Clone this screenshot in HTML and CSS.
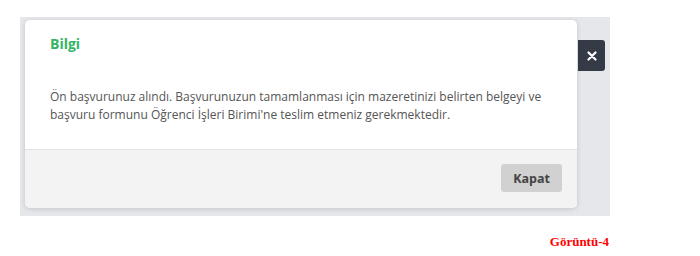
FILE: index.html
```html
<!DOCTYPE html>
<html lang="tr">
<head>
    <meta charset="UTF-8">
    <meta name="viewport" content="width=device-width, initial-scale=1.0">
    <title>Görüntü-4</title>
    <link rel="stylesheet" href="styles.css">
</head>
<body>
    <div class="backdrop">
        <div class="modal">
            <div class="modal-header">
                <h4>Bilgi</h4>
            </div>
            <div class="modal-body">
                <p>Ön başvurunuz alındı. Başvurunuzun tamamlanması için mazeretinizi belirten belgeyi ve başvuru formunu Öğrenci İşleri Birimi'ne teslim etmeniz gerekmektedir.</p>
            </div>
            <div class="modal-footer">
                <button type="button">Kapat</button>
            </div>
        </div>
        <button type="button" class="close-btn" aria-label="Kapat">
            <svg width="10" height="10" viewBox="0 0 10 10">
                <path d="M1.5 1.5 L8.5 8.5 M8.5 1.5 L1.5 8.5" stroke="#fff" stroke-width="2.2" stroke-linecap="round"/>
            </svg>
        </button>
    </div>

    <p class="caption">Görüntü-4</p>
</body>
</html>
```

FILE: styles.css
```css
* {
    margin: 0;
    padding: 0;
    box-sizing: border-box;
}

body {
    background-color: white;
    font-family: 'Open Sans', sans-serif;
}

.backdrop {
    display: flex;
    align-items: flex-start;
    width: 590px;
    height: 199px;
    margin: 17px 0 0 20px;
    padding: 3px 0 0 5px;
    background-color: #e5e7eb;
}

.modal {
    width: 552px;
    height: 188px;
    display: flex;
    flex-direction: column;
    background-color: white;
    border-radius: 5px;
    overflow: hidden;
    box-shadow: 0 1px 5px rgba(0,0,0,0.15);
}

.modal-header {
    padding: 14px 25px;
}

.modal-header h4 {
    font-size: 14px;
    line-height: 20px;
    font-weight: bold;
    color: #33b564;
}

.modal-body {
    padding: 20px 25px 25px;
}

.modal-body p {
    font-size: 12px;
    line-height: 18px;
    color: #555;
}

.modal-footer {
    flex: 1;
    display: flex;
    justify-content: flex-end;
    align-items: flex-start;
    padding: 14px 15px 0;
    background-color: #f3f3f3;
    border-top: 1px solid #e3e3e3;
}

.modal-footer button {
    width: 61px;
    height: 28px;
    background-color: #d1d1d1;
    color: #444;
    border: none;
    border-radius: 3px;
    font-family: 'Open Sans', sans-serif;
    font-size: 12.5px;
    font-weight: bold;
    cursor: pointer;
}

.close-btn {
    display: flex;
    align-items: center;
    justify-content: center;
    width: 27px;
    height: 31px;
    margin: 20px 0 0 1px;
    background-color: #343a46;
    border: none;
    border-radius: 0 3px 3px 0;
    cursor: pointer;
}

.caption {
    width: 609px;
    margin-top: 18px;
    text-align: right;
    font-family: 'Liberation Serif', serif;
    font-size: 13px;
    font-weight: bold;
    color: #ff0000;
}
```
